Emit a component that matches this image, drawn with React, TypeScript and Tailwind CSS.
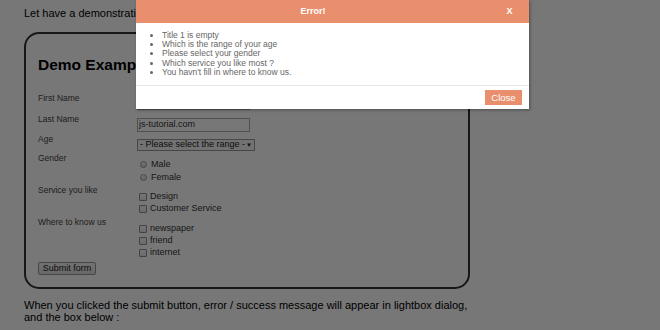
import React from "react";

const errors = [
  "Title 1 is empty",
  "Which is the range of your age",
  "Please select your gender",
  "Which service you like most ?",
  "You havn't fill in where to know us.",
];

const Radio = ({ label }: { label: string }) => (
  <div className="flex items-center h-[13px]">
    <span className="w-[7px] h-[7px] rounded-full border border-[#9a9a9a] bg-gradient-to-b from-[#f4f4f4] to-[#d8d8d8] ml-[3px]" />
    <span className="ml-[4px] text-[9px] text-[#333]">{label}</span>
  </div>
);

const Check = ({ label }: { label: string }) => (
  <div className="flex items-center h-[12px]">
    <span className="w-[8px] h-[8px] rounded-[1px] border border-[#8f8f8f] bg-gradient-to-b from-[#fbfbfb] to-[#e4e4e4] ml-[2px]" />
    <span className="ml-[3px] text-[9px] text-[#333]">{label}</span>
  </div>
);

export default function App() {
  return (
    <div className="relative w-[660px] h-[330px] overflow-hidden bg-white font-['Liberation_Sans',Arial,sans-serif] text-black">
      {/* Page */}
      <div className="pl-[24px] pt-[7px]">
        <p className="text-[11px] leading-[13px]">Let have a demonstration of the form validation below :</p>

        <div className="mt-[12px] w-[446px] h-[257px] border-2 border-[#333] rounded-[15px] pl-[12px] pt-[22px]">
          <h2 className="text-[15.5px] leading-[18px] font-bold">Demo Example</h2>

          <div className="flex flex-col text-[8.5px] text-[#444]">
            {/* First Name */}
            <div className="flex mt-[19px] h-[17px]">
              <span className="w-[99px] leading-[10px]">First Name</span>
              <div className="mt-[3px] w-[113px] h-[14px] border border-[#aaa]" />
            </div>
            {/* Last Name */}
            <div className="flex mt-[4px] h-[18px]">
              <span className="w-[99px] leading-[10px]">Last Name</span>
              <div className="mt-[4px] w-[113px] h-[14px] border border-[#aaa] flex items-center pl-[1px] text-[9px] text-[#333]">
                js-tutorial.com
              </div>
            </div>
            {/* Age */}
            <div className="flex mt-[2px] h-[17px]">
              <span className="w-[99px] leading-[10px]">Age</span>
              <div className="mt-[5px] w-[118px] h-[12px] border border-[#999] bg-[#f4f4f4] flex items-center justify-between px-[2px] text-[9px] text-[#222]">
                <span>- Please select the range -</span>
                <span className="text-[6px]">▼</span>
              </div>
            </div>
            {/* Gender */}
            <div className="flex mt-[2px]">
              <span className="w-[99px] leading-[10px]">Gender</span>
              <div className="mt-[5px] flex flex-col">
                <Radio label="Male" />
                <Radio label="Female" />
              </div>
            </div>
            {/* Service */}
            <div className="flex mt-[1px]">
              <span className="w-[99px] leading-[10px]">Service you like</span>
              <div className="mt-[5.5px] flex flex-col">
                <Check label="Design" />
                <Check label="Customer Service" />
              </div>
            </div>
            {/* Where */}
            <div className="flex mt-[2px]">
              <span className="w-[99px] leading-[10px]">Where to know us</span>
              <div className="mt-[6px] flex flex-col">
                <Check label="newspaper" />
                <Check label="friend" />
                <Check label="internet" />
              </div>
            </div>
          </div>

          <button className="block mt-[3px] w-[58px] h-[13px] border border-[#999] rounded-[2px] bg-gradient-to-b from-[#f6f6f6] to-[#dedede] text-[9px] leading-[11px] text-[#222]">
            Submit form
          </button>
        </div>

        <p className="mt-[10px] text-[11px] leading-[12px]">
          When you clicked the submit button, error / success message will appear in lightbox dialog,
          <br />
          and the box below :
        </p>
      </div>

      {/* Overlay */}
      <div className="absolute inset-0 bg-black/[0.535]" />

      {/* Dialog */}
      <div className="absolute left-[136px] top-0 w-[393px] bg-white shadow-[1px_1px_3px_rgba(0,0,0,0.35)]">
        <div className="flex h-[23px] items-center bg-[#e98f6e] text-white text-[9px] font-bold">
          <span className="flex-1 text-center">Error!</span>
          <span className="w-[39px] text-center">X</span>
        </div>
        <ul className="list-disc pl-[26px] pt-[8px] pb-[8px] text-[8.5px] leading-[9.2px] text-[#666] border-b border-[#e8e8e8]">
          {errors.map((e) => (
            <li key={e}>{e}</li>
          ))}
        </ul>
        <div className="flex justify-end h-[23px] pt-[4px] pr-[7px]">
          <button className="w-[37px] h-[15px] bg-[#e98f6e] text-white text-[9.5px] leading-[15px]">Close</button>
        </div>
      </div>
    </div>
  );
}
